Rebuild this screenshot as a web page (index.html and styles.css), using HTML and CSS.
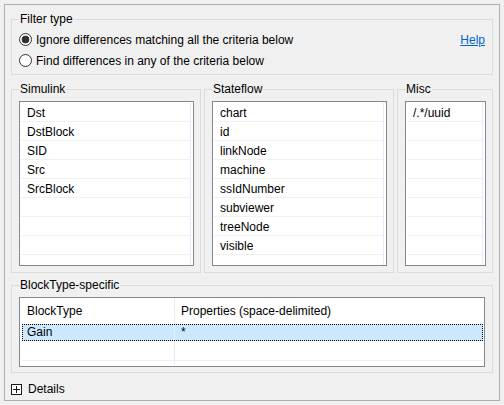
FILE: index.html
```html
<!DOCTYPE html>
<html>
<head>
<meta charset="utf-8">
<link rel="stylesheet" href="styles.css">
</head>
<body>
<div class="panel">
  <fieldset class="group filter">
    <legend>Filter type</legend>
    <div class="radio-row">
      <span class="radio checked"></span>
      <span class="radio-label">Ignore differences matching all the criteria below</span>
      <a class="help" href="#">Help</a>
    </div>
    <div class="radio-row">
      <span class="radio"></span>
      <span class="radio-label">Find differences in any of the criteria below</span>
    </div>
  </fieldset>

  <div class="columns">
    <fieldset class="group col col-sim">
      <legend>Simulink</legend>
      <div class="list">
        <div class="rows">
          <div class="row">Dst</div>
          <div class="row">DstBlock</div>
          <div class="row">SID</div>
          <div class="row">Src</div>
          <div class="row">SrcBlock</div>
          <div class="row"></div>
          <div class="row"></div>
          <div class="row"></div>
          <div class="row"></div>
        </div>
      </div>
    </fieldset>
    <fieldset class="group col col-sf">
      <legend>Stateflow</legend>
      <div class="list">
        <div class="rows">
          <div class="row">chart</div>
          <div class="row">id</div>
          <div class="row">linkNode</div>
          <div class="row">machine</div>
          <div class="row">ssIdNumber</div>
          <div class="row">subviewer</div>
          <div class="row">treeNode</div>
          <div class="row">visible</div>
          <div class="row"></div>
        </div>
      </div>
    </fieldset>
    <fieldset class="group col col-misc">
      <legend>Misc</legend>
      <div class="list">
        <div class="rows">
          <div class="row">/.*/uuid</div>
          <div class="row"></div>
          <div class="row"></div>
          <div class="row"></div>
          <div class="row"></div>
          <div class="row"></div>
          <div class="row"></div>
          <div class="row"></div>
          <div class="row"></div>
        </div>
      </div>
    </fieldset>
  </div>

  <fieldset class="group blocktype">
    <legend>BlockType-specific</legend>
    <div class="table">
      <div class="thead">
        <div class="cell c1">BlockType</div>
        <div class="cell c2">Properties (space-delimited)</div>
      </div>
      <div class="trow selected">
        <div class="cell c1">Gain</div>
        <div class="cell c2">*</div>
      </div>
      <div class="trow empty">
        <div class="cell c1"></div>
        <div class="cell c2"></div>
      </div>
      <div class="tfill">
        <div class="cell c1"></div>
      </div>
    </div>
  </fieldset>

  <div class="details">
    <svg class="expander" width="11" height="11" viewBox="0 0 11 11" shape-rendering="crispEdges">
      <rect x="0.5" y="0.5" width="10" height="10" fill="#fff" stroke="#1a1a1a"/>
      <path d="M2 5.5h7M5.5 2v7" stroke="#1a1a1a" fill="none"/>
    </svg>
    <span>Details</span>
  </div>
</div>
</body>
</html>
```

FILE: styles.css
```css
* {
  box-sizing: border-box;
}

html,
body {
  margin: 0;
  background: #f0f0f0;
}

body {
  padding: 4px;
  font-family: "Liberation Sans", Arial, sans-serif;
  font-size: 12px;
  color: #000;
}

.panel {
  width: 496px;
  height: 397px;
  border: 1px solid #adadad;
  padding: 6px 6px 0 6px;
  display: flex;
  flex-direction: column;
}

.group {
  margin: 0;
  min-width: 0;
  border: 1px solid #dcdcdc;
  padding: 0 7px;
}

.group legend {
  padding: 0 1px;
  height: 16px;
  line-height: 16px;
}

/* Filter type */
.filter {
  height: 64px;
  padding: 2px 7px 3px 7px;
}

.radio-row {
  display: flex;
  align-items: center;
  height: 21px;
}

.radio {
  width: 13px;
  height: 13px;
  border: 1px solid #333;
  border-radius: 50%;
  background: #fff;
  margin-right: 4px;
  flex: none;
}

.radio.checked {
  background: radial-gradient(circle at center, #333 0, #333 3.6px, #fff 4.2px);
}

.help {
  margin-left: auto;
  color: #0066cc;
  text-decoration: underline;
}

/* Columns */
.columns {
  display: flex;
  gap: 3px;
  margin-top: 6px;
  height: 192px;
}

.col {
  padding: 4px 6px 6px 7px;
}

.col-sim,
.col-sf {
  width: 190px;
  flex: none;
}

.col-misc {
  flex: 1;
}

.list {
  height: 165px;
  border: 1px solid #828790;
  background: #fff;
  padding: 1px 2px 0 1px;
  overflow: hidden;
}

.rows {
  height: 100%;
  border-right: 1px solid #e3ecf6;
  overflow: hidden;
}

.row {
  height: 19px;
  line-height: 18px;
  padding-top: 1px;
  padding-left: 6px;
  border-bottom: 1px solid #f0f0f0;
  white-space: nowrap;
  overflow: hidden;
}

/* BlockType table */
.blocktype {
  margin-top: 4px;
  height: 96px;
  padding: 4px 7px 5px 7px;
}

.table {
  height: 70px;
  border: 1px solid #828790;
  background: #fff;
  display: flex;
  flex-direction: column;
}

.thead {
  display: flex;
  height: 26px;
  align-items: stretch;
}

.thead .cell {
  line-height: 27px;
  padding-left: 7px;
}

.thead .c1 {
  width: 155px;
  border-right: 1px solid #e5ebf2;
}

.thead .c2 {
  padding-left: 6px;
}

.trow {
  display: flex;
  margin: 0 1px 0 2px;
}

.trow .c1 {
  width: 153px;
  border-right: 1px solid #e2ebf5;
}

.trow .c2 {
  flex: 1;
  padding-left: 6px;
}

.trow.selected {
  height: 17px;
  background: #cce8ff;
  border: 1px dotted #000;
  line-height: 15px;
}

.trow.selected .c1 {
  width: 152px;
  padding-left: 4px;
  border-right-color: #e3f0fb;
}

.trow.selected .c2 {
  padding-left: 6px;
}

.trow.empty {
  height: 20px;
  border-bottom: 1px solid #f0f0f0;
}

.tfill {
  flex: 1;
  display: flex;
  margin-left: 2px;
}

.tfill .c1 {
  width: 153px;
  border-right: 1px solid #e2ebf5;
  margin-bottom: 1px;
}

.cell {
  white-space: nowrap;
}

/* Details */
.details {
  display: flex;
  align-items: center;
  height: 16px;
  margin-top: 8px;
}

.expander {
  display: block;
  margin-right: 6px;
  flex: none;
}
```
